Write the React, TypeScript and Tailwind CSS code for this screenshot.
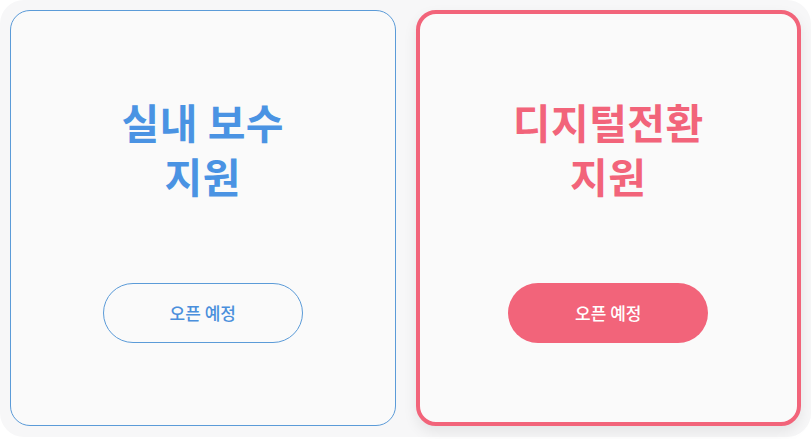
import React from "react";

const font = { fontFamily: '"Noto Sans CJK KR", "Noto Sans", sans-serif' };

function ServiceCard({
  title,
  active,
}: {
  title: [string, string];
  active?: boolean;
}) {
  const titleClass = active
    ? "block h-[54px] text-center text-[41px] font-bold leading-[54px] tracking-[0.5px] text-[#f2647a]"
    : "block h-[54px] text-center text-[41px] font-bold leading-[54px] tracking-[0.5px] text-[#4a93e3]";
  return (
    <div
      className={
        active
          ? "flex flex-col items-center justify-center gap-[81px] rounded-[20px] border-4 border-[#f2647a] bg-[#fafafa] shadow-[0_6px_14px_rgba(0,0,0,0.08)]"
          : "flex flex-col items-center justify-center gap-[81px] rounded-[20px] border border-[#5b9bd8] bg-[#fafafa]"
      }
    >
      <h2 className="flex flex-col items-center">
        <span className={titleClass}>{title[0]}</span>
        <span className={titleClass}>{title[1]}</span>
      </h2>
      <button
        className={
          active
            ? "h-[60px] w-[200px] rounded-full bg-[#f2647a] text-[17px] font-medium text-white"
            : "h-[60px] w-[200px] rounded-full border border-[#5b9bd8] bg-transparent text-[17px] font-medium text-[#4a8fdc]"
        }
      >
        오픈 예정
      </button>
    </div>
  );
}

export default function App() {
  return (
    <div className="min-h-[439px] w-[811px] bg-white" style={font}>
      <div className="grid h-[437px] w-[811px] grid-cols-2 gap-5 rounded-[24px] bg-[#f7f7f8] px-[10px] pb-[11px] pt-[10px]">
        <ServiceCard title={["실내 보수", "지원"]} />
        <ServiceCard title={["디지털전환", "지원"]} active />
      </div>
    </div>
  );
}
